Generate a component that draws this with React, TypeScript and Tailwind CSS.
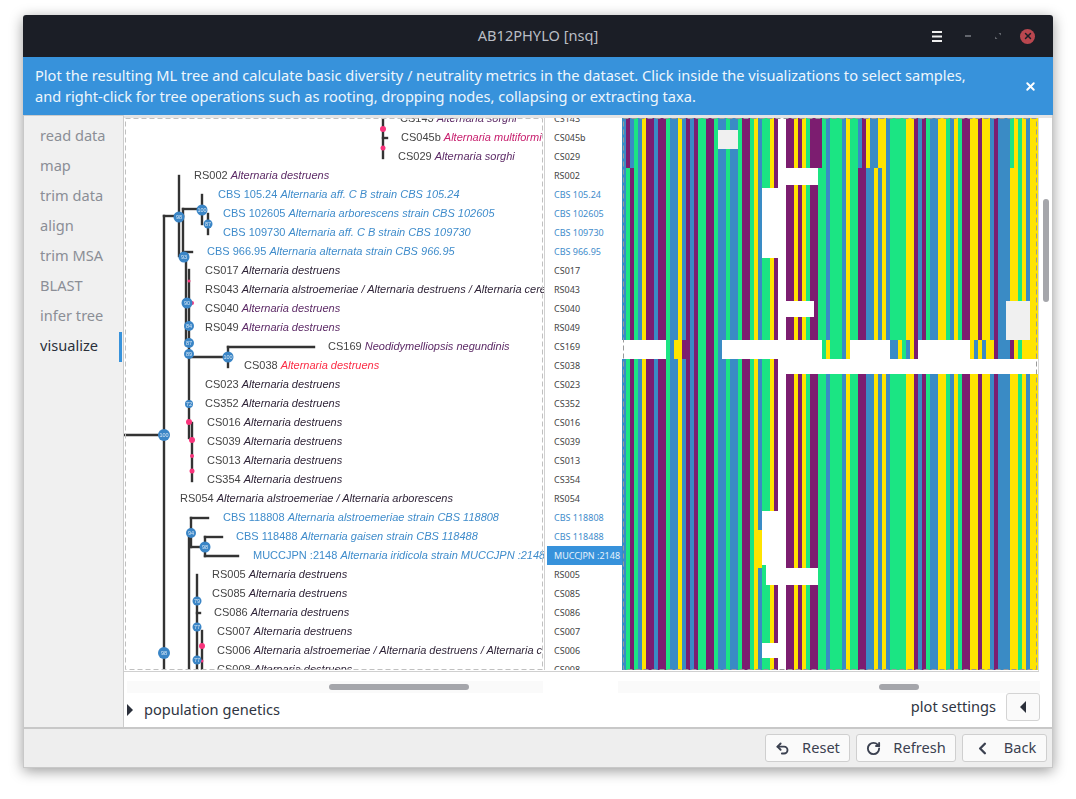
import { ChevronLeft, RotateCw, Undo2, X } from "lucide-react"

type Taxon = { id: string; x: number; species: string; color: string; idColor?: string }

const DARK = "#2f2438"
const PURPLE = "#5c2a66"
const BLUE = "#3f8ccb"

const taxa: Taxon[] = [
  { id: "CS143", x: 400, species: "Alternaria sorghi", color: PURPLE },
  { id: "CS045b", x: 401, species: "Alternaria multiformi", color: "#c8206f" },
  { id: "CS029", x: 398, species: "Alternaria sorghi", color: PURPLE },
  { id: "RS002", x: 194, species: "Alternaria destruens", color: PURPLE },
  { id: "CBS 105.24", x: 218, species: "Alternaria aff. C B strain CBS 105.24", color: BLUE, idColor: BLUE },
  { id: "CBS 102605", x: 223, species: "Alternaria arborescens strain CBS 102605", color: BLUE, idColor: BLUE },
  { id: "CBS 109730", x: 223, species: "Alternaria aff. C B strain CBS 109730", color: BLUE, idColor: BLUE },
  { id: "CBS 966.95", x: 207, species: "Alternaria alternata strain CBS 966.95", color: BLUE, idColor: BLUE },
  { id: "CS017", x: 205, species: "Alternaria destruens", color: DARK },
  { id: "RS043", x: 205, species: "Alternaria alstroemeriae / Alternaria destruens / Alternaria cere", color: DARK },
  { id: "CS040", x: 205, species: "Alternaria destruens", color: PURPLE },
  { id: "RS049", x: 205, species: "Alternaria destruens", color: PURPLE },
  { id: "CS169", x: 328, species: "Neodidymelliopsis negundinis", color: PURPLE },
  { id: "CS038", x: 244, species: "Alternaria destruens", color: "#fb2c45" },
  { id: "CS023", x: 205, species: "Alternaria destruens", color: DARK },
  { id: "CS352", x: 205, species: "Alternaria destruens", color: DARK },
  { id: "CS016", x: 207, species: "Alternaria destruens", color: DARK },
  { id: "CS039", x: 207, species: "Alternaria destruens", color: DARK },
  { id: "CS013", x: 207, species: "Alternaria destruens", color: DARK },
  { id: "CS354", x: 207, species: "Alternaria destruens", color: DARK },
  { id: "RS054", x: 180, species: "Alternaria alstroemeriae / Alternaria arborescens", color: DARK },
  { id: "CBS 118808", x: 223, species: "Alternaria alstroemeriae strain CBS 118808", color: BLUE, idColor: BLUE },
  { id: "CBS 118488", x: 236, species: "Alternaria gaisen strain CBS 118488", color: BLUE, idColor: BLUE },
  { id: "MUCCJPN :2148", x: 253, species: "Alternaria iridicola strain MUCCJPN :2148", color: BLUE, idColor: BLUE },
  { id: "RS005", x: 212, species: "Alternaria destruens", color: DARK },
  { id: "CS085", x: 212, species: "Alternaria destruens", color: DARK },
  { id: "CS086", x: 214, species: "Alternaria destruens", color: DARK },
  { id: "CS007", x: 217, species: "Alternaria destruens", color: DARK },
  { id: "CS006", x: 217, species: "Alternaria alstroemeriae / Alternaria destruens / Alternaria c", color: DARK },
  { id: "CS008", x: 217, species: "Alternaria destruens", color: DARK },
]

// x1 y1 x2 y2
const branches = [
  [383, 115, 383, 158], [383, 138, 387, 138],
  [179, 176, 179, 256], [164, 216, 183, 216], [164, 216, 164, 670], [183, 209, 202, 209], [183, 209, 183, 258],
  [202, 195, 202, 224], [208, 214, 208, 234], [184, 252, 192, 252],
  [186, 256, 186, 345], [189, 270, 189, 438], [189, 357, 228, 357], [228, 347, 228, 367], [228, 347, 314, 347],
  [124, 435, 164, 435], [192, 423, 192, 481],
  [191, 518, 191, 547], [191, 518, 208, 518], [191, 547, 205, 547], [205, 537, 205, 556], [205, 537, 222, 537], [205, 556, 238, 556],
  [189, 532, 189, 670], [197, 575, 197, 670], [197, 613, 200, 613], [202, 631, 202, 670],
]

// cx cy r label
const blueNodes: [number, number, number, string][] = [
  [179, 217, 5.5, "98"], [202, 210, 5.5, "100"], [208, 224, 4.5, "87"], [184, 257, 5.5, "93"],
  [187, 303, 5.5, "90"], [189, 326, 5, "84"], [189, 343, 5, "87"], [189, 354, 5, "89"],
  [228, 357, 5.5, "100"], [189, 404, 4, "72"], [164, 435, 6, "100"], [191, 533, 5, "94"],
  [205, 547, 5.5, "98"], [197, 601, 4.5, "79"], [197, 627, 4.5, "77"], [164, 653, 6, "98"], [197, 660, 4.5, "77"],
]

const pinkNodes: [number, number, number][] = [
  [383, 129, 3], [383, 148, 2.5], [189, 281, 1.5], [192, 303, 2], [189, 422, 3], [192, 440, 3], [192, 456, 2],
  [192, 471, 2.5], [202, 646, 3], [202, 661, 1.5],
]

const CELL = 4
const MSA_X = 622
const TOP = 118
const BOTTOM = 670
const palette: Record<string, string> = { B: "#3a8bc5", G: "#1be583", P: "#7c1d70", Y: "#ffe400", W: "#ffffff", E: "#f0f0f0" }

const base =
  "BGPGBYPPBPPGBBYBPBPGGPPGBBGBBGPPGYBGGYPWWPPYPYGPPGGBGGGBYGGPPBBYBYBGGGGYYPBPGBBYYGBYGPPYYPYYBPBBBYYGYBYY"

// first column, letters, y range
const patches: [number, string, number, number][] = [
  [1, "PB", 118, 168],
  [49, "P", 118, 168],
  [59, "BPYBBYY", 118, 168],
  [97, "G", 118, 168],
  [24, "EEEEE", 130, 149],
  [41, "WWWWWWWW", 168, 185],
  [35, "WWWW", 188, 258],
  [41, "WWWWWWW", 301, 317],
  [96, "EEEEEE", 301, 340],
  [0, "WWWWWWWWWWW", 340, 359],
  [13, "YYP", 340, 359],
  [25, "WWWWWWWWWWWWWWWWWWWWWWWWW", 340, 359],
  [50, "GYGGGBY", 340, 359],
  [57, "WWWWWWWWWW", 340, 359],
  [67, "BBYGBYP", 340, 359],
  [74, "WWWWWWWWWWWWW", 340, 359],
  [87, "YBYBYYPBBBPYGYYYY", 340, 359],
  [39, "W".repeat(65), 359, 374],
  [35, "WWWW", 511, 565],
  [36, "WWW", 565, 585],
  [34, "Y", 530, 568],
  [41, "WWWWWWWW", 568, 585],
  [35, "WWWW", 643, 658],
]

const Cells = ({ start, letters, y1, y2 }: { start: number; letters: string; y1: number; y2: number }) => (
  <>
    {letters.split("").map((c, i) => (
      <rect key={i} x={MSA_X + (start + i) * CELL} y={y1} width={CELL} height={y2 - y1} fill={palette[c]} />
    ))}
  </>
)

const TreePlot = () => (
  <svg viewBox="124 118 420 552" className="w-[420px] h-[552px] blur-[0.4px]">
    {taxa.map((t, i) => (
      <text key={t.id} x={t.x} y={122.4 + 19 * i} fontSize="11" className="font-['Liberation_Sans',sans-serif]">
        <tspan fill={t.idColor ?? "#444444"}>{t.id} </tspan>
        <tspan fill={t.color} fontStyle="italic">{t.species}</tspan>
      </text>
    ))}
    {branches.map(([x1, y1, x2, y2], i) => (
      <line key={i} x1={x1} y1={y1} x2={x2} y2={y2} stroke="#333333" strokeWidth="2.4" strokeLinecap="square" />
    ))}
    {pinkNodes.map(([cx, cy, r], i) => (
      <circle key={i} cx={cx} cy={cy} r={r} fill="#f9347c" />
    ))}
    {blueNodes.map(([cx, cy, r, label], i) => (
      <g key={i}>
        <circle cx={cx} cy={cy} r={r} fill="#3a85c6" />
        <text x={cx} y={cy + 2} fontSize="5.500" textAnchor="middle" fill="#d8e8f5" className="font-['Liberation_Sans',sans-serif]">
          {label}
        </text>
      </g>
    ))}
  </svg>
)

const MsaPlot = () => (
  <svg viewBox="622 118 416 552" shapeRendering="crispEdges" className="w-[416px] h-[552px]">
    <Cells start={0} letters={base} y1={TOP} y2={BOTTOM} />
    {patches.map(([start, letters, y1, y2], i) => (
      <Cells key={i} start={start} letters={letters} y1={y1} y2={y2} />
    ))}
  </svg>
)

// the selection frame the plots draw around themselves
const DashedFrame = ({ stroke, x, width }: { stroke: string; x: number; width: number }) => (
  <svg className="absolute inset-0 w-full h-full pointer-events-none">
    <rect x={x} y="0.5" width={width} height="551" fill="none" stroke={stroke} strokeDasharray="5 3" />
  </svg>
)

const WindowControls = () => (
  <div className="w-[140px] shrink-0 flex items-center justify-end pr-[18px]">
    <svg width="10" height="11" viewBox="0 0 10 11" className="shrink-0">
      <path d="M0 0h10v2H0zM0 4.500h10v2H0zM0 9h10v2H0z" fill="#eeeeee" />
    </svg>
    <svg width="6" height="6" viewBox="0 0 6 6" className="shrink-0 ml-[23px]">
      <rect y="2" width="6" height="2" fill="#63666d" />
    </svg>
    <svg width="6" height="6" viewBox="0 0 6 6" className="shrink-0 ml-[24px]">
      <path d="M3.500 0H6v2.500zM0 3.500 2.500 6H0z" fill="#63666d" />
    </svg>
    <div className="w-[15px] h-[15px] shrink-0 ml-[19px] rounded-full bg-[#b9474f] flex items-center justify-center">
      <X size={10} strokeWidth={3.5} color="#1b1e26" />
    </div>
  </div>
)

const FooterButton = ({ icon, label, width }: { icon: React.ReactNode; label: string; width: string }) => (
  <button className={`${width} h-[28px] flex items-center justify-center gap-[12px] bg-[#fafafa] border border-[#cfcfcf] rounded-[3px] text-[14.6px] text-[#3b4150]`}>
    {icon}
    {label}
  </button>
)

const steps = ["read data", "map", "trim data", "align", "trim MSA", "BLAST", "infer tree"]

const App = () => {
  return (
    <div className="w-[1076px] h-[799px] bg-white pt-[15px] pl-[23px] overflow-hidden font-['Noto_Sans',sans-serif]">
      <div className="w-[1030px] h-[753px] flex flex-col bg-white rounded-t-[3px] overflow-hidden shadow-[0_3px_14px_rgba(0,0,0,0.4)]">
        <div className="h-[42px] shrink-0 flex items-center bg-[#1b1e26]">
          <div className="w-[140px] shrink-0" />
          <div className="flex-1 text-center text-[14.6px] text-[#b9bdc4]">AB12PHYLO [nsq]</div>
          <WindowControls />
        </div>

        <div className="h-[58px] shrink-0 flex items-center justify-between bg-[#3792db] pl-[12px] pr-[16px] text-[14.6px] leading-[21px] text-[#eef6fc]">
          <p>
            Plot the resulting ML tree and calculate basic diversity / neutrality metrics in the dataset. Click inside the visualizations to select samples,
            <br />
            and right-click for tree operations such as rooting, dropping nodes, collapsing or extracting taxa.
          </p>
          <X size={13} strokeWidth={3.5} color="#ffffff" />
        </div>

        <div className="flex-1 min-h-0 flex border-x border-[#c8c8c8]">
          <div className="w-[100px] shrink-0 flex flex-col pt-[5px] bg-[#f0f0f0] border-r border-[#cccccc] border-t">
            {steps.map(s => (
              <div key={s} className="h-[30px] flex items-center pl-[16px] text-[14.6px] text-[#8b8e96]">{s}</div>
            ))}
            <div className="h-[30px] flex items-center pl-[16px] pr-[1px] justify-between text-[14.6px] text-[#2b303b]">
              visualize
              <div className="w-[3px] h-[30px] translate-y-[1px] bg-[#3792db]" />
            </div>
          </div>

          <div className="flex-1 min-w-0 flex flex-col bg-white">
            <div className="h-[3px] shrink-0 bg-[#e4e4e4]" />
            <div className="h-[553px] shrink-0 flex">
              <div className="relative w-[420px] shrink-0 h-[552px] overflow-hidden">
                <TreePlot />
                <DashedFrame stroke="#c0c0c0" x={1.5} width={417} />
              </div>
              <div className="w-[78px] shrink-0 h-[552px] overflow-hidden border-l border-[#d0d0d0] pl-[2px]">
                <div className="-mt-[9px] flex flex-col">
                  {taxa.map(t => {
                    const selected = t.id === "MUCCJPN :2148"
                    return (
                      <div
                        key={t.id}
                        className={selected ? "h-[19px] shrink-0 flex items-center pl-[7px] text-[9px] bg-[#3792db] text-[#e6f2fb] whitespace-nowrap" : "h-[19px] shrink-0 flex items-center pl-[7px] text-[9px] whitespace-nowrap"}
                        style={selected ? undefined : { color: t.idColor ?? "#444444" }}
                      >
                        {t.id}
                      </div>
                    )
                  })}
                </div>
              </div>
              <div className="relative w-[416px] shrink-0 h-[552px] overflow-hidden">
                <MsaPlot />
                <DashedFrame stroke="#9a9a9a" x={1.5} width={413} />
              </div>
              <div className="flex-1 pl-[4px] pt-[81px] border-l border-[#d8d8d8]">
                <div className="w-[6px] h-[103px] rounded-full bg-[#a5a6ab]" />
              </div>
            </div>
            <div className="h-[1px] shrink-0 mr-[13px] bg-[#d0d0d0]" />

            <div className="flex justify-between mt-[9px] pr-[12px] pl-[3px]">
              <div className="w-[416px] h-[12px] flex items-center pl-[202px] bg-[#fafafa]">
                <div className="w-[140px] h-[6px] rounded-full bg-[#a5a6ab]" />
              </div>
              <div className="w-[422px] h-[12px] flex items-center pl-[261px] bg-[#fafafa]">
                <div className="w-[40px] h-[6px] rounded-full bg-[#a5a6ab]" />
              </div>
            </div>

            <div className="h-[28px] flex items-center justify-between pl-[3px] pr-[12px] text-[14.6px] text-[#2f3542]">
              <div className="flex items-center gap-[11px] pt-[6px]">
                <svg width="6" height="12" viewBox="0 0 6 12">
                  <path d="M0 0 6 6 0 12z" fill="#2b303b" />
                </svg>
                population genetics
              </div>
              <div className="flex items-center gap-[10px]">
                plot settings
                <button className="w-[34px] h-[28px] flex items-center justify-center bg-[#fafafa] border border-[#d4d4d4] rounded-[3px]">
                  <svg width="6" height="12" viewBox="0 0 6 12">
                    <path d="M6 0 0 6 6 12z" fill="#2b303b" />
                  </svg>
                </button>
              </div>
            </div>
          </div>
        </div>

        <div className="h-[41px] shrink-0 flex items-center justify-end gap-[6px] pr-[5px] bg-[#eeeeee] border border-t-2 border-[#c8c8c8]">
          <FooterButton width="w-[85px]" label="Reset" icon={<Undo2 size={15} strokeWidth={3} />} />
          <FooterButton width="w-[100px]" label="Refresh" icon={<RotateCw size={15} strokeWidth={3} />} />
          <FooterButton width="w-[85px]" label="Back" icon={<ChevronLeft size={19} strokeWidth={3} />} />
        </div>
      </div>
    </div>
  )
}

export default App
